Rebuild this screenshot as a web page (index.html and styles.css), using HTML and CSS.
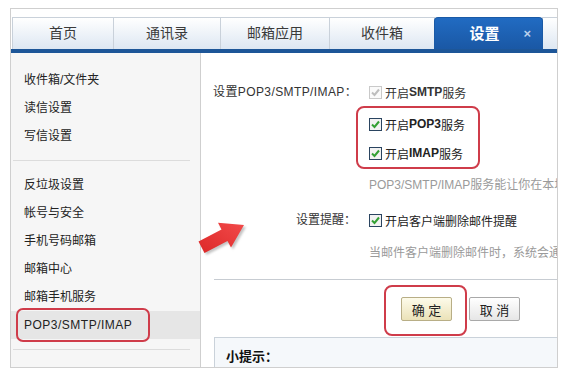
FILE: index.html
```html
<!DOCTYPE html>
<html lang="zh-CN">
<head>
<meta charset="UTF-8" />
<title>设置 - POP3/SMTP/IMAP</title>
<link rel="stylesheet" href="styles.css">
</head>
<body>
<div class="frame">
  <div class="tabs">
    <div class="tab" style="width:102px">首页</div>
    <div class="tab" style="width:108px">通讯录</div>
    <div class="tab" style="width:110px">邮箱应用</div>
    <div class="tab" style="width:106px">收件箱</div>
    <div class="tab active" style="width:109px">设置<span class="tab-close">×</span></div>
    <div class="tab" style="width:60px">-</div>
  </div>
  <div class="bar"></div>
  <div class="main">
    <div class="sidebar">
      <ul class="nav first">
        <li>收件箱/文件夹</li>
        <li>读信设置</li>
        <li>写信设置</li>
      </ul>
      <ul class="nav">
        <li>反垃圾设置</li>
        <li>帐号与安全</li>
        <li>手机号码邮箱</li>
        <li>邮箱中心</li>
        <li>邮箱手机服务</li>
        <li class="current">POP3/SMTP/IMAP<span class="mark mark-nav"></span></li>
      </ul>
    </div>
    <div class="content">
      <div class="field">
        <div class="field-label wide">设置POP3/SMTP/IMAP：</div>
        <div class="field-body">
          <label class="check disabled">
            <svg class="box" width="13" height="13" viewBox="0 0 13 13"><rect x="0.5" y="0.5" width="12" height="12" fill="#fafafa" stroke="#c9c9c9"/><path d="M3 6.5 L5.5 9 L10 3.5" fill="none" stroke="#bdbdbd" stroke-width="2"/></svg>
            开启<b>SMTP</b>服务
          </label>
          <div class="check-group">
            <label class="check">
              <svg class="box" width="13" height="13" viewBox="0 0 13 13"><rect x="0.5" y="0.5" width="12" height="12" fill="#f2f2f2" stroke="#2a4460"/><path d="M3 6.5 L5.5 9 L10 3.5" fill="none" stroke="#33a033" stroke-width="2"/></svg>
              开启<b>POP3</b>服务
            </label>
            <label class="check">
              <svg class="box" width="13" height="13" viewBox="0 0 13 13"><rect x="0.5" y="0.5" width="12" height="12" fill="#f2f2f2" stroke="#2a4460"/><path d="M3 6.5 L5.5 9 L10 3.5" fill="none" stroke="#33a033" stroke-width="2"/></svg>
              开启<b>IMAP</b>服务
            </label>
            <span class="mark mark-group"></span>
          </div>
          <p class="hint">POP3/SMTP/IMAP服务能让你在本地客户端上收发邮件</p>
        </div>
      </div>
      <div class="field second">
        <div class="field-label">设置提醒：</div>
        <div class="field-body">
          <label class="check">
            <svg class="box" width="13" height="13" viewBox="0 0 13 13"><rect x="0.5" y="0.5" width="12" height="12" fill="#f2f2f2" stroke="#2a4460"/><path d="M3 6.5 L5.5 9 L10 3.5" fill="none" stroke="#33a033" stroke-width="2"/></svg>
            开启客户端删除邮件提醒
          </label>
          <p class="hint">当邮件客户端删除邮件时，系统会通过邮件提醒你</p>
        </div>
      </div>
      <div class="actions">
        <button class="btn btn-ok">确 定<span class="mark mark-btn"></span></button>
        <button class="btn">取 消</button>
      </div>
      <div class="tips"><b>小提示：</b></div>
    </div>
  </div>
  <svg class="arrow" width="70" height="70" viewBox="0 0 70 70">
    <defs>
      <filter id="soft" x="-50%" y="-50%" width="200%" height="200%"><feGaussianBlur stdDeviation="1.3"/></filter>
      <linearGradient id="red" x1="0" y1="1" x2="1" y2="0">
        <stop offset="0" stop-color="#dc2828"/>
        <stop offset="1" stop-color="#f24a4a"/>
      </linearGradient>
    </defs>
    <path d="M31 19 L55 19" stroke="#555" stroke-width="4" stroke-linecap="round" filter="url(#soft)"/>
    <polygon points="53,25 40,47.6 36.5,41 13.5,53.1 7.5,41.5 30.5,29.4 27,22.8" fill="#c4c4c4" filter="url(#soft)" transform="translate(2,2)"/>
    <polygon points="53,25 40,47.6 36.5,41 13.5,53.1 7.5,41.5 30.5,29.4 27,22.8" fill="url(#red)"/>
  </svg>
</div>
</body>
</html>
```

FILE: styles.css
```css
body {
  margin: 0;
  background: #fff;
  font-family: "Liberation Sans", "Noto Sans CJK SC", sans-serif;
  font-size: 12px;
  color: #222;
}
.frame {
  position: relative;
  margin: 8px 0 0 10px;
  width: 546px;
  height: 358px;
  border: 1px solid #cfcfcf;
  overflow: hidden;
}
.tabs {
  display: flex;
  align-items: flex-end;
  height: 40px;
  padding-left: 1px;
  box-sizing: border-box;
}
.tab {
  position: relative;
  flex: none;
  height: 32px;
  line-height: 31px;
  box-sizing: border-box;
  border: 1px solid #c9d1da;
  border-bottom: none;
  margin-right: -1px;
  background: linear-gradient(#ffffff, #dde7f2);
  text-align: center;
  font-size: 14px;
  color: #3a3a3a;
}
.tab.active {
  border-color: #1a5aa6;
  border-radius: 4px 4px 0 0;
  background: linear-gradient(#216bc2, #1a58a5);
  color: #fff;
  font-weight: bold;
  font-size: 15px;
  padding-right: 8px;
  z-index: 1;
}
.tab-close {
  position: absolute;
  right: 11px;
  top: 0;
  font-size: 13px;
  color: #b9d0ec;
}
.bar {
  height: 4px;
  background: #1d5698;
}
.main {
  display: flex;
  height: 314px;
}
.sidebar {
  width: 189px;
  flex: none;
  background: #f6f6f6;
  border-right: 1px solid #cfcfcf;
}
.nav {
  list-style: none;
  margin: 0;
  padding: 0 0 10px;
  border-bottom: 1px solid #dcdcdc;
  margin-right: 10px;
  margin-left: 2px;
}
.nav.first {
  padding-top: 13px;
  margin-bottom: 10px;
}
.nav li {
  position: relative;
  height: 28px;
  line-height: 28px;
  padding-left: 13px;
  margin-left: -2px;
  margin-right: -10px;
  color: #222;
}
.nav li.current {
  background: #e6e6e6;
  letter-spacing: 0.5px;
}
.mark {
  position: absolute;
  box-sizing: border-box;
  border: 2px solid #cf3c4a;
  border-radius: 7px;
  pointer-events: none;
}
.mark-nav {
  left: 5px;
  top: -3px;
  width: 134px;
  height: 34px;
}
.content {
  position: relative;
  flex: 1;
  min-width: 0;
  overflow: hidden;
  padding-top: 29px;
}
.field {
  display: grid;
  grid-template-columns: 143px 1fr;
  column-gap: 13px;
  padding-left: 12px;
  color: #333;
}
.field.second {
  margin-top: 15px;
}
.field-label {
  text-align: right;
  line-height: 20px;
  white-space: nowrap;
}
.field-label.wide {
  letter-spacing: 0.4px;
}
.field-body {
  min-width: 0;
}
.check {
  display: flex;
  align-items: center;
  height: 20px;
  white-space: nowrap;
  color: #222;
}
.check b {
  font-weight: bold;
}
.check.disabled {
  color: #333;
}
.box {
  flex: none;
  margin-right: 3px;
}
.check-group {
  position: relative;
  margin-top: 12px;
}
.check-group .check + .check {
  margin-top: 9px;
}
.mark-group {
  left: -13px;
  top: -8px;
  width: 124px;
  height: 63px;
  border-radius: 8px;
}
.hint {
  margin: 12px 0 0;
  line-height: 20px;
  color: #9a9a9a;
  white-space: nowrap;
}
.second .hint {
  margin-top: 13px;
}
.actions {
  display: flex;
  gap: 17px;
  margin: 16px 0 0 13px;
  padding: 17px 0 16px 187px;
  border-top: 1px solid #c7ccd2;
}
.btn {
  position: relative;
  width: 51px;
  height: 24px;
  padding: 0;
  border: 1px solid #a9a9a9;
  border-radius: 2px;
  background: linear-gradient(#ffffff, #e6e6e6);
  font-family: "Liberation Sans", "Noto Sans CJK SC", sans-serif;
  font-size: 13px;
  color: #222;
}
.btn-ok {
  border-color: #b8ae86;
  background: linear-gradient(#fdfbea, #ebe2b8);
}
.mark-btn {
  left: -18px;
  top: -13px;
  width: 83px;
  height: 51px;
  border-radius: 8px;
}
.tips {
  margin-left: 13px;
  height: 40px;
  padding: 8px 11px;
  border: 1px solid #cad2da;
  border-right: none;
  background: #f5f8fb;
  font-size: 13px;
  color: #111;
}
.arrow {
  position: absolute;
  left: 180px;
  top: 191px;
}
```
